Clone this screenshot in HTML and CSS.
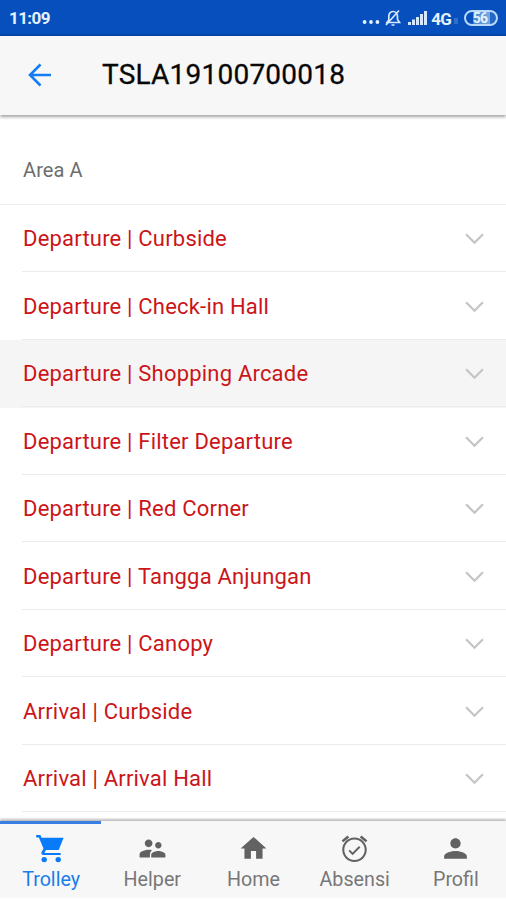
FILE: index.html
```html
<!DOCTYPE html>
<html lang="id">
<head>
<meta charset="utf-8">
<title>Trolley</title>
<link rel="stylesheet" href="styles.css">
</head>
<body>
<div class="status">
  <span class="clock">11:09</span>
  <div class="indicators">
    <svg class="dots" width="18" height="20" viewBox="0 0 18 20"><circle cx="2.6" cy="13" r="1.900"/><circle cx="9" cy="13" r="1.900"/><circle cx="15.4" cy="13" r="1.900"/></svg>
    <svg class="bell" width="18" height="20" viewBox="0 0 18 20"><path d="M3 14.500h12.500l-2-3V8.500C13.500 5.500 11.500 3.500 9 3.500S4.800 5.500 4.800 8.500v3.500zM7.500 17h3M2 17 15 2.500"/></svg>
    <svg class="signal" width="22" height="20" viewBox="0 0 22 20"><path d="M1 14h3v3H1zM5 11.500h3V17H5zM9 9h3v8H9zM13 6h3v11h-3zM17 3h3v14h-3z"/></svg>
    <span class="net">4G</span><span class="flow"></span>
    <span class="battery">56</span>
  </div>
</div>
<header class="header">
  <svg class="back" width="24" height="24" viewBox="0 0 24 24"><path d="M23 12H2M12.500 1.500 2 12l10.500 10.500"/></svg>
  <h1>TSLA19100700018</h1>
</header>
<main class="content">
  <div class="area">Area A</div>
  <ul class="list">
    <li><div class="row"><span>Departure | Curbside</span><svg class="chev" viewBox="0 0 18 12"><path d="m1 2 8 8 8-8"/></svg></div></li>
    <li><div class="row"><span>Departure | Check-in Hall</span><svg class="chev" viewBox="0 0 18 12"><path d="m1 2 8 8 8-8"/></svg></div></li>
    <li class="pressed"><div class="row"><span>Departure | Shopping Arcade</span><svg class="chev" viewBox="0 0 18 12"><path d="m1 2 8 8 8-8"/></svg></div></li>
    <li><div class="row"><span>Departure | Filter Departure</span><svg class="chev" viewBox="0 0 18 12"><path d="m1 2 8 8 8-8"/></svg></div></li>
    <li><div class="row"><span>Departure | Red Corner</span><svg class="chev" viewBox="0 0 18 12"><path d="m1 2 8 8 8-8"/></svg></div></li>
    <li><div class="row"><span>Departure | Tangga Anjungan</span><svg class="chev" viewBox="0 0 18 12"><path d="m1 2 8 8 8-8"/></svg></div></li>
    <li><div class="row"><span>Departure | Canopy</span><svg class="chev" viewBox="0 0 18 12"><path d="m1 2 8 8 8-8"/></svg></div></li>
    <li><div class="row"><span>Arrival | Curbside</span><svg class="chev" viewBox="0 0 18 12"><path d="m1 2 8 8 8-8"/></svg></div></li>
    <li><div class="row"><span>Arrival | Arrival Hall</span><svg class="chev" viewBox="0 0 18 12"><path d="m1 2 8 8 8-8"/></svg></div></li>
  </ul>
</main>
<nav class="tabs">
  <a class="tab active"><svg viewBox="1.3 0 31 31"><path d="M1.500 2h4.200l1.200 2.800h22L24 17H11.300l-1.600 3H26v2H9c-2.200 0-3-1.500-2-3.200l1.800-3.200L4.200 4.500H1.500z"/><circle cx="9.500" cy="26.600" r="2.700"/><circle cx="23.500" cy="26.600" r="2.700"/></svg><span>Trolley</span></a>
  <a class="tab"><svg viewBox="0 0 24 24"><path d="M16.500 12c1.380 0 2.490-1.120 2.490-2.500S17.880 7 16.500 7 14 8.120 14 9.500s1.120 2.500 2.500 2.500zM9 11c1.660 0 2.990-1.340 2.990-3S10.660 5 9 5 6 6.340 6 8s1.340 3 3 3zm7.500 3c-1.830 0-5.500.92-5.500 2.750V19h11v-2.250c0-1.830-3.670-2.750-5.500-2.750zM9 13c-2.330 0-7 1.170-7 3.500V19h8v-2.250c0-.85.330-2.340 1.700-3.370C10.500 13.100 9.660 13 9 13z"/></svg><span>Helper</span></a>
  <a class="tab"><svg viewBox="0 0 24 24"><path d="M10 20v-6h4v6h5v-8h3L12 3 2 12h3v8z"/></svg><span>Home</span></a>
  <a class="tab"><svg viewBox="0 0 24 24"><path d="M22 5.720l-4.600-3.860-1.290 1.530 4.600 3.860L22 5.720zM7.880 3.390L6.600 1.860 2 5.710l1.290 1.530 4.590-3.850zM12 3.500c-5.250 0-9.500 4.250-9.500 9.500s4.250 9.500 9.500 9.500 9.500-4.250 9.500-9.500-4.250-9.500-9.500-9.500zm0 17.400c-4.360 0-7.900-3.540-7.900-7.900s3.540-7.900 7.900-7.900 7.900 3.540 7.900 7.900-3.540 7.900-7.900 7.900zm-1.460-5.800L8.410 12.900l-1.060 1.060 3.180 3.180 6-6-1.060-1.060-4.930 4.950z"/></svg><span>Absensi</span></a>
  <a class="tab"><svg viewBox="0 0 24 24"><path d="M12 12c2.210 0 4-1.790 4-4s-1.790-4-4-4-4 1.790-4 4 1.790 4 4 4zm0 2c-2.670 0-8.800 1.340-8.800 4v2h17.600v-2c0-2.660-6.130-4-8.800-4z"/></svg><span>Profil</span></a>
</nav>
</body>
</html>
```

FILE: styles.css
```css
* { box-sizing: border-box; }
body { margin: 0; height: 900px; display: flex; flex-direction: column; background: #fff; overflow: hidden; font-family: Roboto, sans-serif; }
.status { height: 36px; flex: none; background: #064fbd; border-bottom: 2px solid #0544ac; display: flex; align-items: center; justify-content: space-between; padding: 2px 8px 0 9px; color: #e4f1ff; }
.clock { font-size: 17px; font-weight: 700; letter-spacing: -0.6px; }
.indicators { display: flex; align-items: center; height: 22px; }
.dots { fill: #e4f1ff; margin-right: 4px; margin-top: 1px; }
.bell { fill: none; stroke: #d5e8ff; stroke-width: 1.7; margin-right: 5px; }
.signal { fill: #d5e8ff; margin-right: 2px; }
.net { font-size: 17px; font-weight: 700; line-height: 20px; letter-spacing: -0.8px; padding-top: 1px; }
.flow { width: 4px; height: 6px; margin: 6px 6px 0 3px; background: #2c70ca; }
.battery { width: 34px; height: 16px; border: 2px solid #b9d8fa; border-radius: 8px; background: linear-gradient(90deg, #064fbd 24%, #4885cf 24%, #76a7e0 80%, #2467c5 80%); font-size: 14px; line-height: 12px; font-weight: 700; text-align: center; letter-spacing: -0.8px; padding-right: 2px; }
.header { height: 79px; flex: none; background: #f7f7f7; box-shadow: 0 2px 3px rgba(0,0,0,.36); display: flex; align-items: center; padding: 0 28px 2px; z-index: 1; }
.back { fill: none; stroke: #147df5; stroke-width: 2.6; margin-right: 50px; }
h1 { margin: 0; font-size: 28px; font-weight: 400; letter-spacing: .22px; line-height: 34px; color: #080808; -webkit-text-stroke: .3px #080808; }
.content { flex: 1; min-height: 0; overflow: hidden; }
.area { height: 90px; border-bottom: 1px solid #eee; padding: 43px 23px 0; font-size: 20px; line-height: 24px; letter-spacing: .1px; color: #6d6d6d; }
.list { list-style: none; margin: 0; padding: 0; }
.list li { height: 67.5px; padding-left: 22px; }
.row { height: 67px; display: flex; align-items: center; justify-content: space-between; padding: 1px 22px 0 1px; border-bottom: 1px solid #ebebeb; font-size: 22px; letter-spacing: .2px; color: #cb1519; }
.pressed { background: #f5f5f5; }
.chev { width: 19px; height: 13px; fill: none; stroke: #c5c5c5; stroke-width: 2.2; }
.tabs { height: 77px; flex: none; margin-bottom: 2px; background: #f7f7f7; box-shadow: 0 -2px 2px rgba(0,0,0,.26); display: grid; grid-template-columns: repeat(5, 1fr); }
.tab { display: flex; flex-direction: column; align-items: center; padding: 9px 0 0 1px; border-top: 3px solid transparent; color: #777; font-size: 19.700px; line-height: 24px; }
.tab svg { width: 31px; height: 31px; fill: #626262; margin-bottom: 4px; }
.active { border-color: #397fe2; color: #1b7deb; }
.tab.active svg { fill: #087bfa; }
```
